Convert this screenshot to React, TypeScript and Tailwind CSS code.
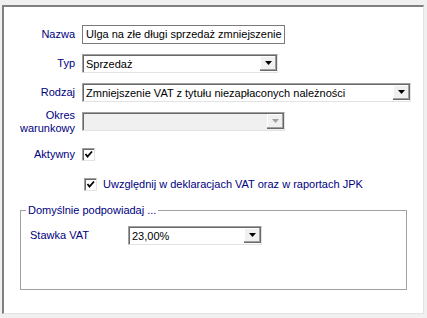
import React from "react";

const font = { fontFamily: "'Liberation Sans', Arial, sans-serif" };

const Arrow: React.FC<{ disabled?: boolean }> = ({ disabled }) => (
  <div className="w-[17px] h-full flex items-center justify-center bg-[#f0f0f0] border-b border-r border-b-[#696969] border-r-[#696969] shadow-[inset_-1px_-1px_0_#a0a0a0,inset_1px_1px_0_#ffffff]">
    <svg width="7" height="4" viewBox="0 0 7 4">
      <polygon points="0,0 7,0 3.5,4" fill={disabled ? "#a0a0a0" : "#000"} />
    </svg>
  </div>
);

const Combo: React.FC<{ value?: string; width: string; disabled?: boolean }> = ({
  value,
  width,
  disabled,
}) => (
  <div
    className={`${width} h-[19px] flex items-stretch border border-t-[#a0a0a0] border-l-[#a0a0a0] border-b-[#e3e3e3] border-r-[#e3e3e3] ${
      disabled ? "bg-[#f0f0f0]" : "bg-white"
    } shadow-[inset_1px_1px_0_#696969]`}
  >
    <div className="flex-1 pl-[3px] pt-[1px] text-[11px] leading-[16px] text-black whitespace-nowrap overflow-hidden">
      {value}
    </div>
    <div className="py-[1px] h-full">
      <Arrow disabled={disabled} />
    </div>
  </div>
);

const Check: React.FC = () => (
  <div className="w-[13px] h-[13px] bg-white border border-t-[#a0a0a0] border-l-[#a0a0a0] border-b-[#e3e3e3] border-r-[#e3e3e3] shadow-[inset_1px_1px_0_#696969] flex items-center justify-center">
    <svg width="9" height="9" viewBox="0 0 9 9">
      <path d="M1.5 4 L3.5 6.5 L8 1.5" stroke="#000" strokeWidth="1.8" fill="none" />
    </svg>
  </div>
);

const Label: React.FC<{ children: React.ReactNode }> = ({ children }) => (
  <div className="w-[71px] text-right text-[11px] leading-[13px] text-[#000080]">{children}</div>
);

export default function App() {
  return (
    <div className="w-[427px] h-[318px] bg-[#f0f0f0] pt-[5px] pl-[2px]" style={font}>
      <div className="w-[422px] h-[309px] bg-white border-t-2 border-l-2 border-t-[#808080] border-l-[#808080] border-r border-b border-r-[#e3e3e3] border-b-[#e3e3e3] flex flex-col pt-[18px]">
        <div className="flex items-center gap-[7px]">
          <Label>Nazwa</Label>
          <div className="w-[203px] h-[19px] border border-[#7a7a7a] bg-white pl-[3px] text-[11px] leading-[17px] text-black whitespace-nowrap overflow-hidden">
            Ulga na złe długi sprzedaż zmniejszenie
          </div>
        </div>
        <div className="flex items-center gap-[7px] mt-[10px]">
          <Label>Typ</Label>
          <Combo value="Sprzedaż" width="w-[196px]" />
        </div>
        <div className="flex items-center gap-[7px] mt-[10px]">
          <Label>Rodzaj</Label>
          <Combo value="Zmniejszenie VAT z tytułu niezapłaconych należności" width="w-[329px]" />
        </div>
        <div className="flex items-start gap-[7px] mt-[7px]">
          <Label>
            Okres
            <br />
            warunkowy
          </Label>
          <div className="mt-[3px]">
            <Combo width="w-[203px]" disabled />
          </div>
        </div>
        <div className="flex items-center gap-[7px] mt-[13px]">
          <Label>Aktywny</Label>
          <Check />
        </div>
        <div className="flex items-center gap-[6px] mt-[17px] pl-[80px]">
          <Check />
          <span className="text-[11px] leading-[13px] text-[#000080]">
            Uwzględnij w deklaracjach VAT oraz w raportach JPK
          </span>
        </div>
        <fieldset className="mt-[13px] ml-[16px] w-[387px] h-[86px] border border-[#a0a0a0]">
          <legend className="ml-[5px] px-[2px] text-[11px] leading-[13px] text-[#000080]">
            Domyślnie podpowiadaj ...
          </legend>
          <div className="flex items-center mt-[9px] pl-[9px]">
            <div className="w-[98px] text-[11px] leading-[13px] text-[#000080]">Stawka VAT</div>
            <Combo value="23,00%" width="w-[134px]" />
          </div>
        </fieldset>
      </div>
    </div>
  );
}
